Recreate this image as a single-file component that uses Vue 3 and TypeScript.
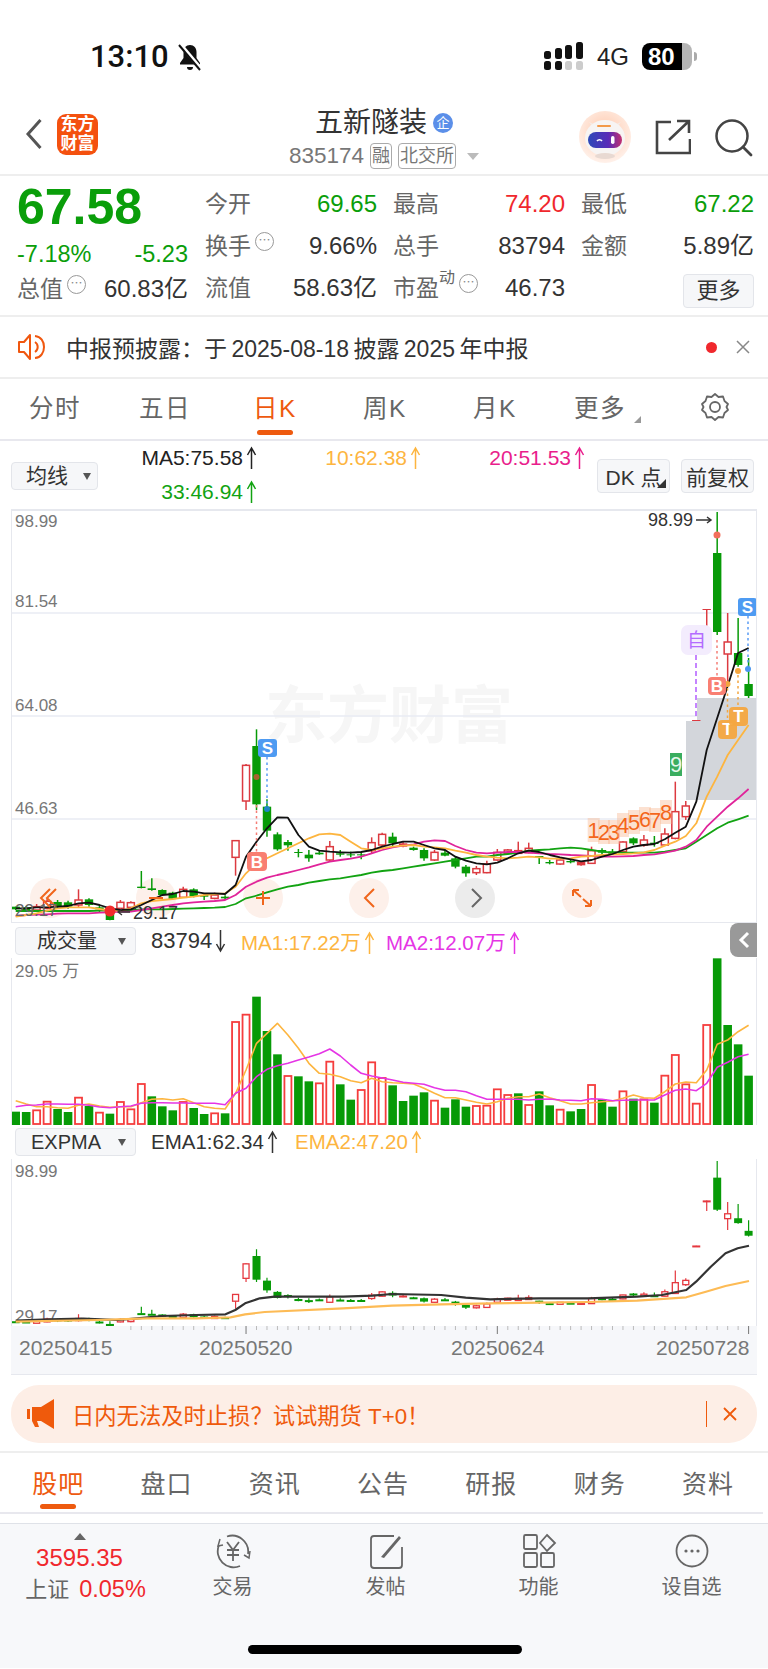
<script setup lang="ts">
type Candle = [string, number, number, number, number]

const stepX = 10.47
const xAt = (i: number) => 15.7 + stepX * i
// chart values are read off the reference: abs y = 700 + v / 3
const yAt = (v: number) => 700 + v / 3
const expY = (abs: number) => 1161 + (abs - 512) * 0.406

const candles: Candle[] = [
  ['g', 620, 620, 628, 630], ['g', 618, 622, 630, 632], ['r', 612, 620, 630, 632], ['r', 595, 604, 625, 628],
  ['g', 600, 606, 620, 626], ['g', 602, 607, 620, 626], ['r', 568, 600, 615, 622], ['g', 595, 598, 615, 620],
  ['g', 618, 622, 628, 636], ['g', 620, 640, 660, 661], ['r', 600, 607, 625, 628], ['r', 604, 608, 622, 628],
  ['g', 513, 560, 564, 565], ['g', 535, 565, 570, 572], ['g', 568, 570, 585, 588], ['g', 575, 578, 597, 598],
  ['r', 560, 568, 592, 594], ['g', 565, 568, 590, 592], ['g', 580, 585, 590, 600], ['r', 578, 585, 595, 598],
  ['g', 586, 590, 595, 598], ['r', 420, 422, 472, 527], ['r', 192, 196, 303, 330], ['g', 88, 138, 313, 330],
  ['g', 298, 320, 392, 410], ['g', 397, 403, 448, 452], ['g', 420, 426, 436, 452], ['g', 447, 456, 459, 472],
  ['g', 450, 464, 475, 485], ['g', 452, 458, 463, 464], ['r', 423, 440, 480, 483], ['g', 450, 460, 464, 470],
  ['g', 455, 463, 466, 472], ['g', 455, 463, 466, 478], ['r', 412, 428, 452, 462], ['r', 398, 403, 435, 440],
  ['g', 398, 410, 430, 442], ['f', 425, 430, 440, 442], ['g', 440, 443, 450, 452], ['g', 445, 450, 475, 482],
  ['r', 450, 457, 480, 483], ['g', 448, 458, 467, 469], ['g', 470, 475, 500, 505], ['g', 495, 500, 520, 530],
  ['r', 498, 506, 518, 525], ['r', 482, 492, 518, 520], ['r', 447, 457, 480, 482], ['r', 447, 450, 460, 462],
  ['r', 425, 452, 460, 462], ['r', 428, 445, 458, 460], ['g', 468, 468, 472, 492], ['g', 480, 486, 490, 493],
  ['r', 478, 480, 492, 494], ['g', 477, 483, 487, 490], ['f', 483, 485, 496, 497], ['r', 440, 452, 490, 492],
  ['g', 445, 450, 458, 465], ['g', 447, 454, 462, 465], ['r', 424, 426, 455, 457], ['g', 412, 415, 430, 435],
  ['r', 405, 420, 435, 440], ['g', 408, 428, 432, 440], ['r', 385, 402, 435, 437], ['r', 245, 335, 415, 418],
  ['r', 303, 318, 350, 360], ['f', 60, 60, 63, 63], ['f', -273, -273, -270, -195], ['g', -564, -441, -204, -195],
  ['r', -261, -174, -138, -54], ['g', -246, -141, -105, -100], ['g', -126, -48, -12, -6]
]

const ma5 = [625,625,622,622,620,618,610,608,615,625,630,628,615,600,585,582,573,575,580,580,582,555,470,425,385,352,353,405,440,452,455,457,458,456,450,440,432,425,425,435,445,450,470,482,490,493,488,475,460,452,456,465,472,478,484,480,470,462,450,440,435,432,418,398,380,305,150,54,-42,-141,-156]
const ma10 = [650,645,640,632,625,622,622,622,627,632,632,625,610,603,600,597,593,590,585,582,580,560,520,490,475,460,445,430,415,403,401,405,425,445,450,445,440,437,435,440,442,445,452,458,465,470,473,475,473,470,472,476,476,475,470,468,465,463,462,460,457,450,437,425,408,370,290,230,165,120,75]
const ma20 = [648,645,644,643,641,640,640,640,638,637,635,635,630,625,620,615,610,607,605,603,600,585,560,545,533,525,518,510,502,493,485,480,476,470,460,450,442,437,433,425,421,423,438,450,458,460,458,456,456,458,460,462,463,465,466,468,470,470,469,468,465,463,458,452,440,420,380,350,320,295,267]
const ma33 = [633,633,633,633,633,633,633,633,632,632,632,630,628,628,628,627,626,625,624,623,621,612,595,587,577,568,560,555,548,543,538,535,530,525,518,513,510,505,500,495,490,485,480,475,470,470,465,462,458,452,450,448,445,443,445,450,455,458,458,458,458,458,455,450,445,425,405,385,368,358,347]

const volTops = [545,546,541,515,537,546,503,528,548,551,516,538,462,499,529,541,516,534,552,550,550,276,254,200,303,373,438,439,454,460,395,463,509,480,397,444,466,513,497,487,512,533,508,530,528,527,478,495,490,525,484,526,539,544,537,465,507,530,484,506,508,518,437,375,463,521,285,85,285,343,437]
const volRed = new Set([2,3,6,8,10,11,12,16,19,21,22,26,29,30,33,34,35,40,44,45,46,47,49,52,55,58,60,62,63,64,65,66])
const volMa1 = [512,522,530,530,533,535,526,522,528,532,530,530,518,508,506,510,506,518,530,535,537,490,420,340,310,280,315,355,400,430,433,440,452,458,445,455,458,460,462,475,490,503,503,510,517,522,515,505,500,500,492,503,512,522,522,518,515,513,505,495,503,505,485,462,456,458,420,343,330,305,286]
const volMa2 = [530,526,525,522,522,523,523,526,531,533,530,528,520,518,518,519,519,520,520,520,524,490,475,440,418,407,400,390,381,371,357,378,405,430,438,444,450,457,460,463,473,481,481,485,497,508,508,508,508,510,508,507,510,511,512,506,508,512,511,510,510,510,495,481,477,482,460,412,397,380,373]

const ema1 = [[32,572],[100,568],[170,566],[240,570],[280,565],[330,558],[400,555],[460,553],[480,540],[500,520],[530,505],[560,500],[600,500],[700,500],[760,497],[800,492],[900,495],[950,503],[1000,508],[1100,505],[1200,505],[1300,500],[1350,495],[1400,480],[1420,455],[1450,410],[1480,370],[1505,355],[1528,347]]
const ema2 = [[32,575],[200,570],[300,565],[400,565],[470,562],[500,553],[540,546],[700,535],[800,527],[900,523],[1000,520],[1100,518],[1200,516],[1300,512],[1400,502],[1440,485],[1480,468],[1528,453]]

const linePath = (vals: number[]) => vals.map((v, i) => `${i ? 'L' : 'M'}${xAt(i).toFixed(1)} ${yAt(v).toFixed(1)}`).join('')
const volPath = (vals: number[]) => vals.map((v, i) => `${i ? 'L' : 'M'}${xAt(i).toFixed(1)} ${(930 + v / 3).toFixed(1)}`).join('')
const emaPath = (pts: number[][]) => pts.map((p, i) => `${i ? 'L' : 'M'}${(p[0] / 2.04).toFixed(1)} ${(1130 + p[1] / 3).toFixed(1)}`).join('')

const mainCandles = candles.map((c, i) => ({
  x: xAt(i), kind: c[0], high: yAt(c[1]), top: yAt(c[2]), bot: yAt(c[3]), low: yAt(c[4])
}))
const expCandles = mainCandles.map(c => ({
  x: c.x, kind: c.kind, high: expY(c.high), top: expY(c.top), bot: Math.max(expY(c.bot), expY(c.top) + 2), low: expY(c.low)
}))
const volBars = volTops.map((t, i) => ({
  x: xAt(i), top: 930 + t / 3, h: (585 - t) / 3, red: volRed.has(i)
}))
const ticks = Array.from({ length: 60 }, (_, k) => ({ x: xAt(k + 11), major: [22, 46, 70].includes(k + 11) }))

const seqNums = [
  { n: 1, x: 593.7, y: 830 }, { n: 2, x: 604, y: 832 }, { n: 3, x: 614, y: 832 }, { n: 4, x: 623, y: 825 },
  { n: 5, x: 634, y: 822 }, { n: 6, x: 645, y: 819 }, { n: 7, x: 655, y: 820 }, { n: 8, x: 666, y: 812 }
]
const axisLabels = [
  { t: '98.99', y: 527 }, { t: '81.54', y: 607 }, { t: '64.08', y: 711 }, { t: '46.63', y: 814 }
]
const topTabs = ['分时', '五日', '日K', '周K', '月K', '更多']
const bottomTabs = ['股吧', '盘口', '资讯', '公告', '研报', '财务', '资料']
</script>

<template>
  <div class="page">
    <div class="status">
      <span class="time">13:10</span>
      <svg class="bell" width="26" height="30" viewBox="0 0 26 30">
        <path d="M13 3c-4 0-6.500 3-6.500 7v6L3 21v1.500h20V21l-3.500-5v-6C19.500 6 17 3 13 3z" fill="#111"/>
        <path d="M10 25a3 3 0 0 0 6 0z" fill="#111"/>
        <path d="M3 2l21 25" stroke="#fff" stroke-width="4"/>
        <path d="M2 3l21 25" stroke="#111" stroke-width="2"/>
      </svg>
      <div class="status-right">
        <svg width="40" height="30" viewBox="0 0 40 30">
          <rect x="0" y="9" width="7" height="8" rx="2.500" fill="#111"/><rect x="11" y="6" width="7" height="11" rx="2.500" fill="#111"/>
          <rect x="21" y="3" width="7" height="14" rx="2.500" fill="#111"/><rect x="32" y="0" width="7" height="17" rx="2.500" fill="#111"/>
          <rect x="0" y="19" width="7" height="9" rx="2.500" fill="#111"/><rect x="11" y="19" width="7" height="9" rx="2.500" fill="#111"/>
          <rect x="21" y="19" width="7" height="9" rx="2.500" fill="#ccc"/><rect x="32" y="19" width="7" height="9" rx="2.500" fill="#ccc"/>
        </svg>
        <span class="net">4G</span>
        <div class="battery"><span>80</span></div>
        <i class="nub"></i>
      </div>
    </div>

    <div class="nav">
      <div class="nav-left">
        <svg width="18" height="32" viewBox="0 0 18 32"><path d="M15.500 2L3 16l12.500 14" fill="none" stroke="#555" stroke-width="3"/></svg>
        <div class="logo"><span>东方</span><span>财富</span></div>
      </div>
      <div class="nav-mid">
        <div class="title">五新隧装<span class="ent">企</span></div>
        <div class="code">
          <span>835174</span><em class="tag">融</em><em class="tag">北交所</em><i class="caret"></i>
        </div>
      </div>
      <div class="nav-right">
        <svg width="52" height="52" viewBox="0 0 52 52">
          <defs>
            <radialGradient id="av" cx="50%" cy="40%" r="60%"><stop offset="0" stop-color="#ffc9ad"/><stop offset="1" stop-color="#fff1ea"/></radialGradient>
            <linearGradient id="vis" x1="0" x2="1"><stop offset="0" stop-color="#2d49b8"/><stop offset="0.6" stop-color="#5a2bb8"/><stop offset="1" stop-color="#c2306e"/></linearGradient>
          </defs>
          <ellipse cx="26" cy="26" rx="26" ry="26" fill="url(#av)"/>
          <path d="M10 11l5 6 4-2zM42 11l-5 6-4-2z" fill="#f4ece8"/>
          <ellipse cx="26" cy="27" rx="20" ry="18" fill="#f7f4f3"/>
          <rect x="18" y="14" width="14" height="2" rx="1" fill="#f39a4a"/>
          <rect x="9" y="21" width="34" height="16" rx="8" fill="url(#vis)"/>
          <path d="M18 30a3 3 0 0 1 5 0" fill="none" stroke="#fff" stroke-width="1.500"/>
          <rect x="32" y="25" width="3.500" height="8" rx="1.700" fill="#fff"/>
          <ellipse cx="26" cy="45" rx="10" ry="3" fill="#e8d9d2"/>
        </svg>
        <svg width="36" height="36" viewBox="0 0 36 36">
          <path d="M16 3H2v31h33V20" fill="none" stroke="#444" stroke-width="2.600"/>
          <path d="M14 21L34 2M22 2h12v12" fill="none" stroke="#444" stroke-width="2.600"/>
        </svg>
        <svg width="38" height="38" viewBox="0 0 38 38">
          <circle cx="17" cy="17" r="15.500" fill="none" stroke="#444" stroke-width="2.500"/>
          <path d="M28 28l8 8" stroke="#444" stroke-width="2.800" stroke-linecap="round"/>
        </svg>
      </div>
    </div>

    <div class="quote">
      <div class="q-left">
        <div class="price">67.58</div>
        <div class="q-row green"><span>-7.18%</span><span>-5.23</span></div>
        <div class="q-row"><span class="lb">总值<i class="dots">⋯</i></span><span>60.83亿</span></div>
      </div>
      <div class="q-grid">
        <div class="cell"><span class="lb">今开</span><span class="green">69.65</span></div>
        <div class="cell"><span class="lb">最高</span><span class="red">74.20</span></div>
        <div class="cell"><span class="lb">最低</span><span class="green">67.22</span></div>
        <div class="cell"><span class="lb">换手<i class="dots">⋯</i></span><span>9.66%</span></div>
        <div class="cell"><span class="lb">总手</span><span>83794</span></div>
        <div class="cell"><span class="lb">金额</span><span>5.89亿</span></div>
        <div class="cell"><span class="lb">流值</span><span>58.63亿</span></div>
        <div class="cell"><span class="lb">市盈<sup>动</sup><i class="dots">⋯</i></span><span>46.73</span></div>
        <div class="cell end"><button class="btn more">更多</button></div>
      </div>
    </div>

    <div class="notice">
      <svg width="30" height="28" viewBox="0 0 30 28">
        <path d="M12 2v24L6 19H1V9h5z" fill="none" stroke="#f0570f" stroke-width="2" stroke-linejoin="round"/>
        <path d="M17 9a6 6 0 0 1 0 10M17 3c12 1 12 21 0 22" fill="none" stroke="#f0570f" stroke-width="2"/>
      </svg>
      <span class="notice-text">中报预披露：于 2025-08-18 披露 2025 年中报</span>
      <i class="dot"></i>
      <svg width="14" height="14" viewBox="0 0 14 14"><path d="M1 1l12 12M13 1L1 13" stroke="#888" stroke-width="1.500"/></svg>
    </div>

    <div class="tabs top">
      <div v-for="(t, i) in topTabs" :key="t" class="tab" :class="{ on: i === 2, shift: i === 5 }">
        <span>{{ t }}<i v-if="i === 5" class="corner"></i></span><b></b>
      </div>
      <div class="tab">
        <svg width="30" height="30" viewBox="0 0 30 30"><path d="M15 2l3.500 3 4.500-.5 1.500 4.500 3.500 3-1.500 3 1.500 3-3.500 3-1.500 4.500-4.500-.500-3.500 3-3.500-3-4.500.500-1.500-4.500-3.500-3 1.500-3-1.500-3 3.500-3L7 4.500l4.500.5z" fill="none" stroke="#666" stroke-width="1.800" stroke-linejoin="round"/><circle cx="15" cy="15" r="5" fill="none" stroke="#666" stroke-width="1.800"/></svg>
        <b></b>
      </div>
    </div>

    <div class="toolbar">
      <div class="sel s-ma">均线<i class="tri"></i></div>
      <div class="legend">
        <span class="k">MA5:75.58<svg class="arr" viewBox="0 0 12 24"><path d="M6 23V2M2 9l4-7 4 7"/></svg></span>
        <span class="o">10:62.38<svg class="arr" viewBox="0 0 12 24"><path d="M6 23V2M2 9l4-7 4 7"/></svg></span>
        <span class="p">20:51.53<svg class="arr" viewBox="0 0 12 24"><path d="M6 23V2M2 9l4-7 4 7"/></svg></span>
        <span class="g">33:46.94<svg class="arr" viewBox="0 0 12 24"><path d="M6 23V2M2 9l4-7 4 7"/></svg></span>
      </div>
      <button class="btn tool">DK 点<i class="corner dark"></i></button>
      <button class="btn tool">前复权</button>
    </div>

    <div class="chart c-main">
      <svg width="746" height="414" viewBox="11 509 746 414">
        <text x="265" y="738" class="wm">东方财富</text>
        <line v-for="y in [613, 716, 819]" :key="y" x1="11" x2="757" :y1="y" :y2="y" class="grid"/>
        <text v-for="a in axisLabels" :key="a.t" x="15" :y="a.y" class="ax">{{ a.t }}</text>
        <path d="M697 698H757V800H686V721H697z" fill="#d3d6db"/>

        <circle cx="50" cy="898" r="20" fill="#fdf0ea"/>
        <circle cx="156" cy="898" r="20" fill="#fdf0ea"/>
        <circle cx="263" cy="898" r="20" fill="#fdf0ea"/>
        <circle cx="369" cy="898" r="20" fill="#fdf0ea"/>
        <circle cx="475" cy="898" r="20" fill="#ececec"/>
        <circle cx="582" cy="898" r="20" fill="#fdf0ea"/>

        <template v-for="(c, i) in mainCandles" :key="i">
          <line :x1="c.x" :x2="c.x" :y1="c.high" :y2="c.low" :stroke="c.kind === 'g' ? '#079a07' : '#dc3a40'" stroke-width="1.500"/>
          <rect v-if="c.kind === 'r'" :x="c.x - 3.500" :y="c.top" width="7" :height="c.bot - c.top" fill="#fff" stroke="#dc3a40" stroke-width="1.500"/>
          <rect v-else :x="c.x - 4.200" :y="c.top" width="8.400" :height="c.bot - c.top" :fill="c.kind === 'g' ? '#079a07' : '#dc3a40'"/>
        </template>

        <path :d="linePath(ma33)" class="ln" stroke="#12a312"/>
        <path :d="linePath(ma20)" class="ln" stroke="#e0249a"/>
        <path :d="linePath(ma10)" class="ln" stroke="#fdb53f"/>
        <path :d="linePath(ma5)" class="ln" stroke="#111"/>

        <path d="M56 889l-9 9 9 9M50 889l-9 9 9 9" class="ic"/>
        <path d="M149 898h14" class="ic"/>
        <path d="M256 898h14M263 891v14" class="ic"/>
        <path d="M374 889l-9 9 9 9" class="ic"/>
        <path d="M472 889l9 9-9 9" class="ic grey"/>
        <path d="M573 890l8 7M573 890h6M573 890v6M591 906l-8-7M591 906h-6M591 906v-6" class="ic"/>

        <text x="15" y="916" class="ax dim">29.17</text>
        <circle cx="110" cy="911" r="5.500" fill="#f02b2b"/>
        <path d="M130 912h-12M122 909l-4 3 4 3" fill="none" stroke="#333" stroke-width="1.300"/>
        <text x="133" y="919" class="note">29.17</text>
        <text x="648" y="526" class="note">98.99</text>
        <path d="M696 520h14M707 517l4 3-4 3" fill="none" stroke="#333" stroke-width="1.500"/>
        <circle cx="717" cy="535" r="3.500" fill="#f2705c"/>
        <circle cx="256.500" cy="777" r="3" fill="#a8622f"/>
        <circle cx="267" cy="809" r="3" fill="#1e86c8"/>

        <line x1="267" x2="267" y1="757" y2="805" class="dash" stroke="#5a9cf5"/>
        <line x1="256.500" x2="256.500" y1="805" y2="852" class="dash" stroke="#f57d75"/>
        <line x1="717" x2="717" y1="640" y2="676" class="dash" stroke="#f57d75"/>
        <line x1="748" x2="748" y1="616" y2="666" class="dash" stroke="#5a9cf5"/>
        <line x1="696" x2="696" y1="655" y2="719" stroke="#b35cff" stroke-width="1.500" stroke-dasharray="5 3"/>
        <line x1="727.500" x2="727.500" y1="688" y2="722" class="dash" stroke="#f4a640"/>
        <line x1="738" x2="738" y1="675" y2="708" class="dash" stroke="#f4a640"/>
        <circle cx="748" cy="669" r="3" fill="#4a95f0"/>
        <circle cx="727.500" cy="684" r="3" fill="#f4a640"/>
        <circle cx="738" cy="671" r="3" fill="#f4a640"/>

        <g v-for="s in seqNums" :key="s.n">
          <rect :x="s.x - 6" :y="s.y - 12" width="12" height="24" fill="#f8b38c" opacity="0.4"/>
          <text :x="s.x" :y="s.y + 8" class="seq">{{ s.n }}</text>
        </g>
        <rect x="670" y="753" width="12" height="23" fill="#3aad5f"/>
        <text x="676" y="772" class="seq nine">9</text>

        <rect x="681" y="625" width="31" height="30" rx="7" fill="#f3ecfd"/>
        <text x="696.500" y="647" class="mark zi">自</text>

        <g>
          <rect x="258" y="739" width="19" height="18" rx="3" fill="#4e9bf2"/>
          <text x="267.500" y="754" class="mark">S</text>
          <rect x="738" y="598" width="19" height="18" rx="3" fill="#4e9bf2"/>
          <text x="747.500" y="613" class="mark">S</text>
          <rect x="247" y="852" width="20" height="19" rx="4" fill="#f97f72"/>
          <text x="257" y="868" class="mark">B</text>
          <rect x="708" y="677" width="18" height="18" rx="4" fill="#f97f72"/>
          <text x="717" y="692" class="mark">B</text>
          <rect x="718" y="720" width="19" height="19" rx="4" fill="#f4a640" opacity="0.95"/>
          <text x="727.500" y="735" class="mark">T</text>
          <rect x="729" y="707" width="19" height="19" rx="4" fill="#f4a640" opacity="0.95"/>
          <text x="738.500" y="722" class="mark">T</text>
        </g>
      </svg>
    </div>

    <div class="subhead h-vol">
      <div class="sel s-sub wide">成交量<i class="tri"></i></div>
      <span class="nm">83794<svg class="arr" viewBox="0 0 12 24"><path d="M6 1v21M2 15l4 7 4-7"/></svg></span>
      <span class="o">MA1:17.22万<svg class="arr" viewBox="0 0 12 24"><path d="M6 23V2M2 9l4-7 4 7"/></svg></span>
      <span class="m">MA2:12.07万<svg class="arr" viewBox="0 0 12 24"><path d="M6 23V2M2 9l4-7 4 7"/></svg></span>
      <div class="collapse">
        <svg width="12" height="18" viewBox="0 0 12 18"><path d="M10 2L3 9l7 7" fill="none" stroke="#fff" stroke-width="3"/></svg>
      </div>
    </div>

    <div class="chart c-sub">
      <svg width="746" height="167" viewBox="11 958 746 167">
        <text x="15" y="977" class="ax">29.05 万</text>
        <template v-for="(b, i) in volBars" :key="i">
          <rect v-if="b.red" :x="b.x - 3.500" :y="b.top" width="7" :height="b.h - 1" fill="#fff" stroke="#f53d3d" stroke-width="1.800"/>
          <rect v-else :x="b.x - 4.300" :y="b.top" width="8.600" :height="b.h" fill="#079a07"/>
        </template>
        <path :d="volPath(volMa1)" class="ln vol" stroke="#fdb53f"/>
        <path :d="volPath(volMa2)" class="ln vol" stroke="#e535e5"/>
      </svg>
    </div>

    <div class="subhead h-exp">
      <div class="sel s-sub">EXPMA<i class="tri"></i></div>
      <span class="nm">EMA1:62.34<svg class="arr" viewBox="0 0 12 24"><path d="M6 23V2M2 9l4-7 4 7"/></svg></span>
      <span class="o">EMA2:47.20<svg class="arr" viewBox="0 0 12 24"><path d="M6 23V2M2 9l4-7 4 7"/></svg></span>
    </div>

    <div class="chart c-sub">
      <svg width="746" height="167" viewBox="11 1159 746 167">
        <text x="15" y="1177" class="ax">98.99</text>
        <text x="15" y="1322" class="ax">29.17</text>
        <template v-for="(c, i) in expCandles" :key="i">
          <line :x1="c.x" :x2="c.x" :y1="c.high" :y2="c.low" :stroke="c.kind === 'g' ? '#079a07' : '#e5383f'" stroke-width="1.200"/>
          <rect v-if="c.kind === 'r'" :x="c.x - 3" :y="c.top" width="6" :height="c.bot - c.top" fill="#fff" stroke="#e5383f" stroke-width="1.300"/>
          <rect v-else :x="c.x - 4" :y="c.top" width="8" :height="c.bot - c.top" :fill="c.kind === 'g' ? '#079a07' : '#e5383f'"/>
        </template>
        <path :d="emaPath(ema1)" class="ln thick" stroke="#333"/>
        <path :d="emaPath(ema2)" class="ln thick" stroke="#fdbb55"/>
      </svg>
    </div>

    <div class="dates">
      <svg class="tick-row" width="746" height="9" viewBox="11 1326 746 9">
        <line v-for="t in ticks" :key="t.x" :x1="t.x" :x2="t.x" y1="1326" :y2="t.major ? 1334 : 1330" :stroke="t.major ? '#777' : '#bbb'"/>
      </svg>
      <div class="date-row"><span>20250415</span><span>20250520</span><span>20250624</span><span>20250728</span></div>
    </div>

    <div class="banner-wrap">
      <div class="banner">
        <svg width="28" height="34" viewBox="0 0 28 34">
          <rect x="0" y="12" width="3" height="10" fill="#ef5a0c"/>
          <path d="M5 10h9L27 2v30L14 24H10l2 6H8l-3-6z" fill="#ef5a0c"/>
        </svg>
        <span class="ban-text">日内无法及时止损？试试期货 T+0！</span>
        <i class="ban-sep"></i>
        <svg width="16" height="16" viewBox="0 0 16 16"><path d="M2 2l12 12M14 2L2 14" stroke="#ef5a0c" stroke-width="1.800"/></svg>
      </div>
    </div>

    <div class="tabs bottom">
      <div v-for="(t, i) in bottomTabs" :key="t" class="tab" :class="{ on: i === 0 }"><span>{{ t }}</span><b></b></div>
    </div>
    <div class="peek"></div>

    <div class="foot">
      <div class="foot-items">
        <div class="idx">
          <i class="up"></i>
          <div class="idx-num">3595.35</div>
          <div class="idx-row"><span>上证</span><span class="red">0.05%</span></div>
        </div>
        <div class="item">
          <svg width="40" height="36" viewBox="0 0 40 36">
            <path d="M14 3.500A16 16 0 0 1 35 21M27 33A16 16 0 0 1 6 12" fill="none" stroke="#666" stroke-width="1.800"/>
            <path d="M7 6l-2 7 5-1M37 18l-1 7-5-3" fill="none" stroke="#666" stroke-width="1.500"/>
            <path d="M14 9l6 8 6-8M20 17v11M14 17h12M14 22h12" fill="none" stroke="#666" stroke-width="1.800"/>
          </svg>
          <span>交易</span>
        </div>
        <div class="item">
          <svg width="36" height="36" viewBox="0 0 36 36">
            <path d="M26 3H6a3 3 0 0 0-3 3v26a3 3 0 0 0 3 3h25a3 3 0 0 0 3-3V14" fill="none" stroke="#666" stroke-width="1.800"/>
            <path d="M13 24L31 3l2 2L16 25z" fill="#666"/>
          </svg>
          <span>发帖</span>
        </div>
        <div class="item">
          <svg width="36" height="36" viewBox="0 0 36 36">
            <rect x="3" y="2" width="13" height="14" rx="1.500" fill="none" stroke="#666" stroke-width="1.800"/>
            <path d="M26 2l8 8-8 8-7-8z" fill="none" stroke="#666" stroke-width="1.800"/>
            <rect x="3" y="20" width="13" height="14" rx="1.500" fill="none" stroke="#666" stroke-width="1.800"/>
            <rect x="20" y="20" width="13" height="14" rx="1.500" fill="none" stroke="#666" stroke-width="1.800"/>
          </svg>
          <span>功能</span>
        </div>
        <div class="item">
          <svg width="36" height="36" viewBox="0 0 36 36">
            <circle cx="18" cy="18" r="15.500" fill="none" stroke="#666" stroke-width="1.800"/>
            <circle cx="12" cy="18" r="1.600" fill="#666"/><circle cx="18" cy="18" r="1.600" fill="#666"/><circle cx="24" cy="18" r="1.600" fill="#666"/>
          </svg>
          <span>设自选</span>
        </div>
      </div>
      <div class="home"></div>
    </div>
  </div>
</template>

<style>
html, body { margin: 0; background: #fff; }
</style>

<style scoped>
.page {
  width: 768px;
  height: 1669px;
  overflow: hidden;
  background: #fff;
  color: #333;
  font-family: "Liberation Sans", "Noto Sans CJK SC", sans-serif;
  font-size: 24px;
}
i, em { font-style: normal; }
.green { color: #0a9e0a; }
.red { color: #f0282d; }
.arr { width: 13px; height: 24px; margin-left: 2px; vertical-align: -5px; fill: none; stroke: currentColor; stroke-width: 1.500; }

.status { height: 100px; display: flex; align-items: center; padding-top: 13px; box-sizing: border-box; position: relative; }
.time { margin-left: 90px; font-family: Roboto, "Liberation Sans", sans-serif; font-size: 31px; font-weight: 500; color: #111; }
.bell { margin-left: 8px; }
.status-right { margin-left: auto; margin-right: 71px; display: flex; align-items: center; }
.net { margin-left: 13px; font-size: 24px; color: #222; }
.battery { margin-left: 13px; width: 50px; height: 27px; border-radius: 8px; background: linear-gradient(90deg, #000 80%, #b5b5b5 80%); color: #fff; font-weight: 700; font-size: 24px; line-height: 27px; padding-left: 6px; box-sizing: border-box; }
.nub { width: 3px; height: 9px; margin-left: 2px; background: #aaa; border-radius: 0 3px 3px 0; }

.nav { height: 76px; border-bottom: 2px solid #eee; box-sizing: border-box; display: flex; }
.nav-left { width: 200px; height: 68px; display: flex; align-items: center; padding-left: 25px; box-sizing: border-box; gap: 14px; }
.logo { width: 41px; height: 41px; border-radius: 9px; background: #f4510f; color: #fff; font-weight: 700; font-size: 17px; line-height: 19px; display: flex; flex-direction: column; align-items: center; justify-content: center; }
.nav-mid { flex: 1; display: flex; flex-direction: column; align-items: center; padding-top: 7px; }
.title { font-size: 28px; line-height: 32px; display: flex; align-items: center; }
.ent { width: 20px; height: 20px; margin-left: 6px; border-radius: 50%; background: #5b8fe9; color: #fff; font-size: 13px; line-height: 20px; text-align: center; }
.code { display: flex; align-items: center; margin-top: 3px; font-size: 22.500px; line-height: 28px; color: #777; }
.tag { margin-left: 6px; height: 26px; border: 1px solid #aaa; border-radius: 4px; padding: 0 1px; font-size: 18px; line-height: 25px; box-sizing: border-box; }
.caret { margin-left: 11px; border: 6px solid transparent; border-top: 7px solid #bbb; border-bottom: 0; }
.nav-right { width: 200px; display: flex; align-items: flex-start; padding-top: 11px; box-sizing: border-box; justify-content: flex-end; padding-right: 15px; }
.nav-right svg:nth-child(2) { margin: 8px 24px 0 24px; }
.nav-right svg:nth-child(3) { margin-top: 8px; }

.quote { height: 141px; border-bottom: 2px solid #eee; box-sizing: border-box; padding: 7px 13px 0 17px; display: flex; gap: 17px; }
.q-left { width: 171px; flex: none; }
.price { height: 46px; margin: 1px 0 4px; font-size: 50px; font-weight: 700; line-height: 46px; color: #0a9e0a; }
.q-row { display: flex; justify-content: space-between; height: 42px; line-height: 42px; margin-top: -1px; }
.q-row + .q-row { margin-top: -7px; }
.q-row.green { font-size: 23.500px; }
.q-grid { flex: 1; display: grid; grid-template-columns: 172px 172px 173px; grid-auto-rows: 42px; column-gap: 16px; }
.cell { display: flex; justify-content: space-between; line-height: 42px; white-space: nowrap; }
.cell.end { justify-content: flex-end; align-items: center; }
.lb { color: #666; display: inline-flex; font-size: 23px; }
.dots { width: 19px; height: 19px; margin: 7px 0 0 4px; border: 1px solid #999; border-radius: 50%; box-sizing: border-box; font-size: 12px; line-height: 16px; text-align: center; color: #888; display: block; }
.lb sup { font-size: 16px; line-height: 16px; margin-top: 3px; }
.btn { font: inherit; color: #333; background: #f6f7f9; border: 1px solid #e3e5ea; border-radius: 4px; padding: 0; }
.more { width: 71px; height: 34px; line-height: 30px; margin-top: 5px; font-size: 22px; }

.notice { height: 62px; border-bottom: 2px solid #eee; box-sizing: border-box; display: flex; align-items: center; padding: 0 18px; }
.notice-text { margin-left: 18px; color: #333; font-size: 23px; word-spacing: -2px; }
.dot { width: 11px; height: 11px; margin-left: auto; margin-right: 19px; border-radius: 50%; background: #f0282d; }

.tabs { display: grid; box-sizing: border-box; border-bottom: 2px solid #e8e8ee; }
.tabs.top { height: 62px; grid-template-columns: repeat(7, 110px); }
.tabs.bottom { height: 61px; grid-template-columns: repeat(7, 108.300px); padding-left: 4px; margin: 0 5px 0 0; }
.tab { display: flex; flex-direction: column; align-items: center; justify-content: flex-end; color: #666; font-size: 24.500px; white-space: nowrap; }
.tab.shift { padding-right: 10px; }
.tab > span { line-height: 30px; position: relative; letter-spacing: 1.500px; }
.tab > svg { margin-bottom: 2px; }
.tab b { width: 36px; height: 5px; margin-top: 6px; margin-bottom: 4px; border-radius: 3px; }
.tab.on { color: #ee5a0f; }
.tab.on b { background: #ee5a0f; }
.tabs.bottom .tab { font-size: 25px; }
.tabs.bottom .tab > span { letter-spacing: 1px; }
.tabs.bottom .tab b { margin-top: 5px; margin-bottom: 3px; }
.corner { position: absolute; right: -15px; bottom: 1px; border-style: solid; border-width: 0 0 7px 7px; border-color: transparent transparent #999 transparent; }
.corner.dark { right: 3px; bottom: 4px; border-width: 0 0 9px 9px; border-color: transparent transparent #333 transparent; }

.toolbar { height: 68px; display: flex; align-items: flex-start; padding-left: 11px; box-sizing: border-box; }
.sel { position: relative; flex: none; background: #f6f7f9; border: 1px solid #e3e5ea; border-radius: 4px; box-sizing: border-box; color: #333; }
.s-ma { width: 87px; height: 28px; margin-top: 21px; line-height: 26px; font-size: 21px; padding-left: 14px; }
.tri { position: absolute; right: 6px; top: 10px; border: 4px solid transparent; border-top: 7px solid #555; border-bottom: 0; }
.legend { width: 488px; flex: none; display: grid; grid-template-columns: 160px 164px 164px; grid-auto-rows: 34px; line-height: 34px; font-size: 21px; text-align: right; white-space: nowrap; }
.k { color: #222; }
.o { color: #fdb53f; }
.p { color: #e91e8c; }
.g { color: #12a312; }
.m { color: #e535e5; }
.tool { position: relative; flex: none; width: 73px; height: 34px; margin-top: 18px; margin-left: 11px; font-size: 21px; }

.chart { margin: 0 11px; border: 1px solid #e6e8ee; border-width: 0 1px; line-height: 0; overflow: hidden; }
.c-main { height: 414px; border-width: 2px 1px 1px; box-sizing: border-box; }
.c-main svg { margin: -2px 0 0 -1px; }
.c-sub { height: 167px; box-sizing: border-box; }
.c-sub svg { margin-left: -1px; }
.grid { stroke: #e8ebf3; stroke-width: 1.500; }
.ax { font-size: 17px; fill: #777; }
.ax.dim { fill: #666; }
.note { font-size: 18px; fill: #333; }
.wm { font-size: 62px; font-weight: 700; fill: #f6f6f6; }
.ln { fill: none; stroke-width: 1.800; stroke-linejoin: round; }
.ln.vol { stroke-width: 1.600; }
.ln.thick { stroke-width: 2.200; }
.ic { fill: none; stroke: #f0661c; stroke-width: 2; }
.ic.grey { stroke: #666; }
.dash { stroke-width: 1.500; stroke-dasharray: 2.500 3; }
.seq { font-size: 22px; fill: #f4661b; text-anchor: middle; }
.seq.nine { fill: #e6f7ec; }
.mark { font-size: 17px; font-weight: 700; fill: #fff; text-anchor: middle; }
.mark.zi { font-size: 19px; font-weight: 400; fill: #b46cff; }

.subhead { position: relative; display: flex; align-items: center; padding-left: 15px; box-sizing: border-box; font-size: 20.500px; white-space: nowrap; }
.h-vol { height: 35px; }
.h-exp { height: 34px; }
.s-sub { width: 121px; height: 28px; line-height: 26px; font-size: 20px; padding-left: 15px; }
.s-sub.wide { padding-left: 21px; }
.s-sub .tri { right: 9px; }
.nm { margin-left: 15px; color: #333; }
.h-vol .nm { width: 90px; font-size: 22px; }
.h-vol .o { width: 145px; }
.h-exp .nm { width: 144px; }
.collapse { position: absolute; left: 730px; top: 0; width: 27px; height: 34px; background: #999; border-radius: 8px 0 0 8px; display: flex; align-items: center; justify-content: center; }

.dates { margin: 0 11px; height: 48px; background: #f6f7fa; border-bottom: 1px solid #e6e8ee; }
.tick-row { display: block; }
.date-row { display: flex; font-size: 21px; color: #777; line-height: 24px; margin-top: 1px; padding-left: 8px; }
.date-row span:nth-child(1) { width: 180px; }
.date-row span:nth-child(2) { width: 252px; }
.date-row span:nth-child(3) { width: 205px; }

.banner-wrap { height: 78px; padding: 10px 11px; box-sizing: border-box; border-bottom: 2px solid #eee; }
.banner { height: 58px; border-radius: 28px; background: #fdeee6; display: flex; align-items: center; padding-left: 16px; box-sizing: border-box; color: #ef5a0c; }
.ban-text { margin-left: 17px; font-size: 22.300px; }
.ban-sep { width: 1px; height: 26px; margin-left: auto; background: #ef5a0c; }
.banner svg:last-child { margin: 0 19px 0 15px; }

.peek { height: 9px; }
.foot { height: 145px; background: #f7f8fa; border-top: 1px solid #dfe2e8; box-sizing: border-box; position: relative; }
.foot-items { display: grid; grid-template-columns: repeat(5, 153px); padding-left: 3px; padding-top: 9px; }
.idx { display: flex; flex-direction: column; align-items: center; }
.up { border: 6px solid transparent; border-bottom: 7px solid #666; border-top: 0; }
.idx-num { margin-top: 5px; color: #f0282d; font-size: 24px; line-height: 26px; }
.idx-row { margin-top: 4px; margin-left: 12px; display: flex; gap: 10px; align-items: baseline; font-size: 22px; line-height: 28px; color: #666; }
.idx-row .red { font-size: 23.500px; }
.item { display: flex; flex-direction: column; align-items: center; color: #666; font-size: 20px; }
.item span { margin-top: 4px; line-height: 28px; }
.home { position: absolute; left: 248px; top: 121px; width: 274px; height: 9px; border-radius: 5px; background: #000; }
</style>
